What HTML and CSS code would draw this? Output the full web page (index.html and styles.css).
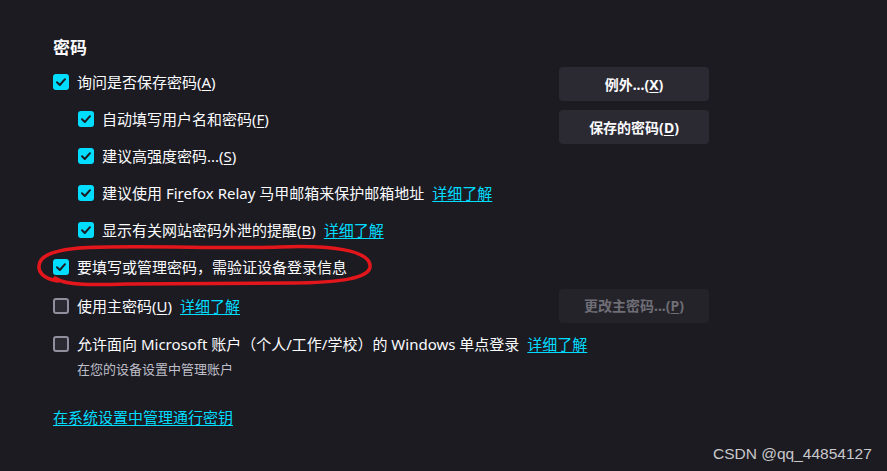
FILE: index.html
```html
<!DOCTYPE html>
<html lang="zh-CN">
<head>
<meta charset="utf-8">
<title>密码</title>
<link rel="stylesheet" href="styles.css">
</head>
<body>
<div class="page">
  <h2 class="heading">密码</h2>
  <div class="top">
    <div class="col-left">
      <div class="row">
        <span class="cb on"><svg viewBox="0 0 16 16"><path d="M4 8.3 L6.8 11 L12 5.2"/></svg></span>
        <span>询问是否保存密码(<u>A</u>)</span>
      </div>
      <div class="row indent">
        <span class="cb on"><svg viewBox="0 0 16 16"><path d="M4 8.3 L6.8 11 L12 5.2"/></svg></span>
        <span>自动填写用户名和密码(<u>F</u>)</span>
      </div>
      <div class="row indent">
        <span class="cb on"><svg viewBox="0 0 16 16"><path d="M4 8.3 L6.8 11 L12 5.2"/></svg></span>
        <span>建议高强度密码...(<u>S</u>)</span>
      </div>
      <div class="row indent">
        <span class="cb on"><svg viewBox="0 0 16 16"><path d="M4 8.3 L6.8 11 L12 5.2"/></svg></span>
        <span>建议使用 Fi<u>r</u>efox Relay 马甲邮箱来保护邮箱地址</span>
        <a class="link" href="#">详细了解</a>
      </div>
      <div class="row indent">
        <span class="cb on"><svg viewBox="0 0 16 16"><path d="M4 8.3 L6.8 11 L12 5.2"/></svg></span>
        <span>显示有关网站密码外泄的提醒(<u>B</u>)</span>
        <a class="link" href="#">详细了解</a>
      </div>
      <div class="row">
        <span class="cb on"><svg viewBox="0 0 16 16"><path d="M4 8.3 L6.8 11 L12 5.2"/></svg></span>
        <span>要填写或管理密码，需验证设备登录信息</span>
      </div>
    </div>
    <div class="btns">
      <div class="btn">例外...(<u>X</u>)</div>
      <div class="btn">保存的密码(<u>D</u>)</div>
    </div>
  </div>
  <div class="row row-tall">
    <div class="row-main">
      <span class="cb"></span>
      <span>使用主密码(<u>U</u>)</span>
      <a class="link" href="#">详细了解</a>
    </div>
    <div class="btn disabled">更改主密码...(<u>P</u>)</div>
  </div>
  <div class="row row-ms">
    <span class="cb"></span>
    <span>允许面向 Microsoft 账户（个人/工作/学校）的 Windows 单点登录</span>
    <a class="link" href="#">详细了解</a>
  </div>
  <div class="sub">在您的设备设置中管理账户</div>
  <a class="link bottom-link" href="#">在系统设置中管理通行密钥</a>
</div>

<svg class="annot" width="887" height="471" viewBox="0 0 887 471">
  <path d="M58 281 C44 279, 36 272, 40 262 C45 251, 70 247, 110 247 C170 246, 230 249, 280 247 C330 245, 368 250, 370 265 C372 278, 340 283, 290 283 L130 284 C95 285, 66 286, 55 278"/>
</svg>
<div class="watermark">CSDN @qq_44854127</div>
</body>
</html>
```

FILE: styles.css
```css
html, body {
  margin: 0;
  padding: 0;
}
body {
  background: #1c1b22;
  color: #fbfbfe;
  font-family: "Noto Sans", "Noto Sans CJK SC", sans-serif;
  font-size: 15px;
  width: 887px;
  height: 471px;
  overflow: hidden;
  position: relative;
}
u {
  text-decoration: underline;
  text-underline-offset: 2px;
}
.page {
  padding: 36px 0 0 53px;
  width: 656px;
}
.heading {
  font-size: 17px;
  font-weight: 700;
  line-height: 24px;
  margin: 0 0 3.5px;
}
.top {
  display: flex;
  justify-content: space-between;
  align-items: flex-start;
}
.col-left {
  display: flex;
  flex-direction: column;
}
.row {
  display: flex;
  align-items: center;
  gap: 8px;
  height: 37px;
  white-space: nowrap;
  line-height: 20px;
}
.row.indent {
  padding-left: 25px;
}
.row-tall {
  height: 40px;
  justify-content: space-between;
}
.row-main {
  display: flex;
  align-items: center;
  gap: 8px;
}
.row-ms {
  height: 36px;
}
.cb {
  flex: none;
  width: 16px;
  height: 16px;
  box-sizing: border-box;
  border-radius: 3px;
  border: 2px solid #8f8f9d;
  background: #2b2a33;
  display: inline-flex;
}
.cb.on {
  border: none;
  background: #00ddff;
}
.cb svg {
  width: 16px;
  height: 16px;
}
.cb svg path {
  fill: none;
  stroke: #1c1b22;
  stroke-width: 2;
  stroke-linecap: round;
  stroke-linejoin: round;
}
.link {
  color: #00ddff;
  text-decoration: underline;
  text-underline-offset: 2px;
}
.btns {
  display: flex;
  flex-direction: column;
  gap: 9px;
  margin-top: 3.5px;
  width: 150px;
}
.btn {
  width: 150px;
  height: 34px;
  border-radius: 4px;
  background: #2b2a33;
  font-size: 14px;
  font-weight: 700;
  display: flex;
  align-items: center;
  justify-content: center;
  color: #fbfbfe;
}
.btn.disabled {
  background: #24232a;
  color: #6f6e76;
}
.sub {
  padding-left: 24px;
  font-size: 13px;
  line-height: 14px;
  color: #bfbfc9;
}
.bottom-link {
  display: block;
  margin-top: 31.5px;
  line-height: 20px;
  width: max-content;
}
.annot {
  position: absolute;
  left: 0;
  top: 0;
  pointer-events: none;
}
.annot path {
  fill: none;
  stroke: #e3161c;
  stroke-width: 3.5;
  stroke-linecap: round;
}
.watermark {
  position: absolute;
  left: 713px;
  top: 444px;
  font-family: "Liberation Sans", Arial, sans-serif;
  font-size: 15.5px;
  line-height: 20px;
  color: #c9c9cb;
}
```
